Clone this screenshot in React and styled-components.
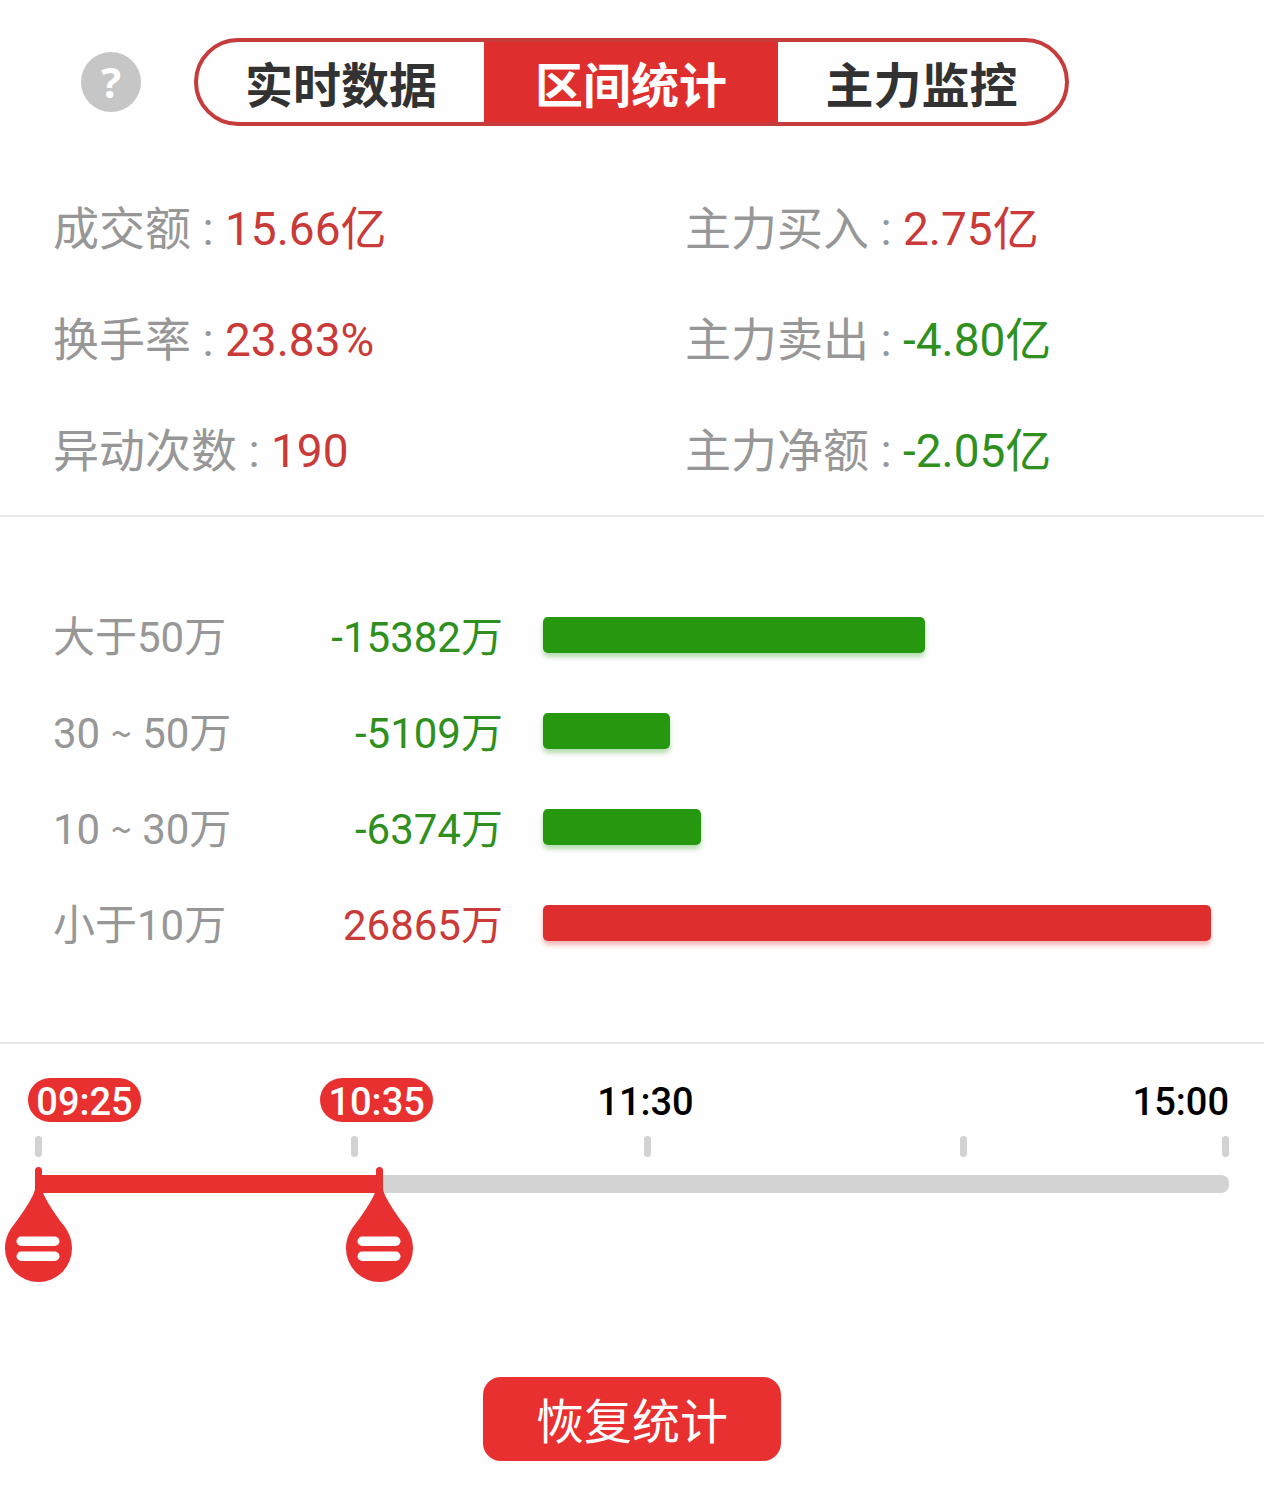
import React, { useState } from "react";
import styled, { createGlobalStyle } from "styled-components";

const GlobalStyle = createGlobalStyle`
  *, *::before, *::after { box-sizing: border-box; }
  body {
    margin: 0;
    background: #fefefe;
    font-family: Roboto, "Noto Sans CJK SC", sans-serif;
  }
  button { font-family: inherit; cursor: pointer; }
`;

const colors = {
  up: "#c93a38",
  down: "#2f9020",
  upBar: "#df2e2e",
  downBar: "#25980f",
  accent: "#e83030",
  label: "#979797",
  track: "#d2d2d2",
};

const Page = styled.main`
  display: flex;
  flex-direction: column;
`;

const Header = styled.header`
  display: flex;
  align-items: center;
  gap: 53px;
  padding: 38px 195px 48px 81px;
`;

const HelpButton = styled.button`
  flex: none;
  width: 60px;
  height: 60px;
  padding: 0;
  border: 0;
  border-radius: 50%;
  background: #c6c6c6;
  color: #fff;
  font: 700 42px/60px "Noto Sans", "Open Sans", sans-serif;
`;

const Tabs = styled.div`
  flex: 1;
  display: grid;
  grid-template-columns: 286fr 294fr 287fr;
  height: 88px;
  border: 4px solid #c63b3b;
  border-radius: 44px;
  overflow: hidden;
`;

const Tab = styled.button`
  padding: 10px 0 0;
  border: 0;
  background: ${(p) => (p.$active ? colors.upBar : "transparent")};
  color: ${(p) => (p.$active ? "#fff" : "#323232")};
  font-size: 48px;
  font-weight: 700;
  line-height: 70px;
`;

const Stats = styled.dl`
  display: grid;
  grid-template-columns: 1fr 1fr;
  margin: 0;
  padding: 0 0 8px 53px;
  column-gap: 53px;
  border-bottom: 2px solid #e9e9e9;
`;

const Stat = styled.div`
  display: flex;
  font-size: 46px;
  line-height: 111px;
  white-space: pre;
`;

const StatLabel = styled.dt`
  color: ${colors.label};
`;

const StatValue = styled.dd`
  margin: 0;
  color: ${(p) => (p.$down ? colors.down : colors.up)};
`;

const Flows = styled.ul`
  margin: 0;
  padding: 70px 53px 71px;
  list-style: none;
  border-bottom: 2px solid #e9e9e9;
`;

const Flow = styled.li`
  display: grid;
  grid-template-columns: 225px 225px 1fr;
  align-items: center;
  height: 96px;
  font-size: 42px;
  line-height: 60px;
`;

const FlowLabel = styled.span`
  padding-top: 6px;
  color: ${colors.label};
  white-space: nowrap;
`;

const Tilde = styled.span`
  font-family: "Noto Sans CJK SC", sans-serif;
  font-size: 38px;
  line-height: 1;
`;

const FlowValue = styled.span`
  padding-top: 6px;
  color: ${(p) => (p.$down ? colors.down : colors.up)};
  text-align: right;
`;

const BarArea = styled.div`
  padding-left: 40px;
`;

const Bar = styled.div`
  height: 36px;
  border-radius: 5px;
  background: ${(p) => (p.$down ? colors.downBar : colors.upBar)};
  box-shadow: 0 4px 5px ${(p) => (p.$down ? "#25980f55" : "#df2e2e55")};
`;

const RangePanel = styled.section`
  padding-top: 34px;
`;

const Times = styled.div`
  display: grid;
  grid-template-columns: 292fr 277fr 535fr auto;
  padding: 0 35px 0 28px;
  font-size: 38px;
  font-weight: 500;
  line-height: 48px;
  color: #000;
`;

const TimePill = styled.output`
  justify-self: start;
  width: 113px;
  height: 44px;
  border-radius: 22px;
  background: ${colors.accent};
  color: #fff;
  text-align: center;
`;

const Ticks = styled.div`
  display: grid;
  grid-template-columns: 316fr 293fr 316fr 262fr 7px;
  margin: 10px 35px 18px;
`;

const Tick = styled.span`
  width: 7px;
  height: 21px;
  border-radius: 4px;
  background: ${colors.track};
`;

const Slider = styled.div`
  position: relative;
  height: 107px;
  margin: 0 38px;
`;

const Track = styled.div`
  height: 18px;
  margin-right: -3px;
  border-radius: 0 8px 8px 0;
  background: ${colors.track};
`;

const Fill = styled.div`
  position: absolute;
  top: 0;
  height: 18px;
  background: ${colors.accent};
`;

const Handle = styled.svg`
  position: absolute;
  top: -8px;
  width: 67px;
  height: 115px;
  margin-left: -33px;
  pointer-events: none;
`;

const RangeInput = styled.input`
  position: absolute;
  top: 0;
  left: -33px;
  width: calc(100% + 66px);
  height: 107px;
  margin: 0;
  opacity: 0;
  pointer-events: none;
  &::-webkit-slider-thumb {
    -webkit-appearance: none;
    width: 67px;
    height: 107px;
    pointer-events: auto;
    cursor: grab;
  }
`;

const ResetButton = styled.button`
  align-self: center;
  height: 84px;
  margin: 95px 0 50px;
  padding: 8px 53px 0;
  border: 0;
  border-radius: 18px;
  background: ${colors.accent};
  color: #fff;
  font-size: 48px;
  line-height: 76px;
`;

const tabs = ["实时数据", "区间统计", "主力监控"];

const stats = [
  ["成交额", "15.66亿"],
  ["主力买入", "2.75亿"],
  ["换手率", "23.83%"],
  ["主力卖出", "-4.80亿"],
  ["异动次数", "190"],
  ["主力净额", "-2.05亿"],
];

const flows = [
  { from: "大于50万", value: -15382 },
  { from: "30", to: "50万", value: -5109 },
  { from: "10", to: "30万", value: -6374 },
  { from: "小于10万", value: 26865 },
];
const largest = Math.max(...flows.map((f) => Math.abs(f.value)));

// The scale runs 09:25-11:30 and 13:00-15:00, without the lunch break.
function toClock(value) {
  const elapsed = Math.round((value / 1000) * 245);
  const minutes = 565 + elapsed + (elapsed > 125 ? 90 : 0);
  const pad = (n) => String(n).padStart(2, "0");
  return `${pad(Math.floor(minutes / 60))}:${pad(minutes % 60)}`;
}

function DropHandle({ value }) {
  return (
    <Handle viewBox="0 0 67 115" style={{ left: `${value / 10}%` }} aria-hidden="true">
      <path
        fill={colors.accent}
        d="M30 3.5a3.5 3.5 0 0 1 7 0V22C38 29 49 46 58 57.5C63.500 64 67 72 67 81.500A33.500 33.500 0 0 1 0 81.500C0 72 3.500 64 9 57.500C18 46 29 29 30 22Z"
      />
      <rect x="11.500" y="69.500" width="43" height="9.500" rx="4.750" fill="#fff" />
      <rect x="11.500" y="84.500" width="43" height="9.500" rx="4.750" fill="#fff" />
    </Handle>
  );
}

export default function App() {
  const [tab, setTab] = useState(1);
  const [start, setStart] = useState(0);
  const [end, setEnd] = useState(287);

  const reset = () => {
    setStart(0);
    setEnd(287);
  };

  return (
    <Page>
      <GlobalStyle />
      <Header>
        <HelpButton type="button">?</HelpButton>
        <Tabs role="tablist">
          {tabs.map((name, i) => (
            <Tab
              key={name}
              type="button"
              role="tab"
              aria-selected={i === tab}
              $active={i === tab}
              onClick={() => setTab(i)}
            >
              {name}
            </Tab>
          ))}
        </Tabs>
      </Header>

      <Stats>
        {stats.map(([label, value]) => (
          <Stat key={label}>
            <StatLabel>{label} : </StatLabel>
            <StatValue $down={value.startsWith("-")}>{value}</StatValue>
          </Stat>
        ))}
      </Stats>

      <Flows>
        {flows.map(({ from, to, value }) => (
          <Flow key={from}>
            <FlowLabel>
              {from}
              {to && <> <Tilde>~</Tilde> {to}</>}
            </FlowLabel>
            <FlowValue $down={value < 0}>{value}万</FlowValue>
            <BarArea>
              <Bar $down={value < 0} style={{ width: `${(Math.abs(value) / largest) * 100}%` }} />
            </BarArea>
          </Flow>
        ))}
      </Flows>

      <RangePanel>
        <Times>
          <TimePill htmlFor="range-start">{toClock(start)}</TimePill>
          <TimePill htmlFor="range-end">{toClock(end)}</TimePill>
          <span>11:30</span>
          <span>15:00</span>
        </Times>
        <Ticks>
          <Tick />
          <Tick />
          <Tick />
          <Tick />
          <Tick />
        </Ticks>
        <Slider>
          <Track />
          <Fill style={{ left: `${start / 10}%`, width: `${(end - start) / 10}%` }} />
          <DropHandle value={start} />
          <DropHandle value={end} />
          <RangeInput
            id="range-start"
            type="range"
            aria-label={toClock(start)}
            min="0"
            max="1000"
            value={start}
            onChange={(e) => setStart(Math.min(Number(e.target.value), end))}
          />
          <RangeInput
            id="range-end"
            type="range"
            aria-label={toClock(end)}
            min="0"
            max="1000"
            value={end}
            onChange={(e) => setEnd(Math.max(Number(e.target.value), start))}
          />
        </Slider>
      </RangePanel>

      <ResetButton type="button" onClick={reset}>恢复统计</ResetButton>
    </Page>
  );
}
